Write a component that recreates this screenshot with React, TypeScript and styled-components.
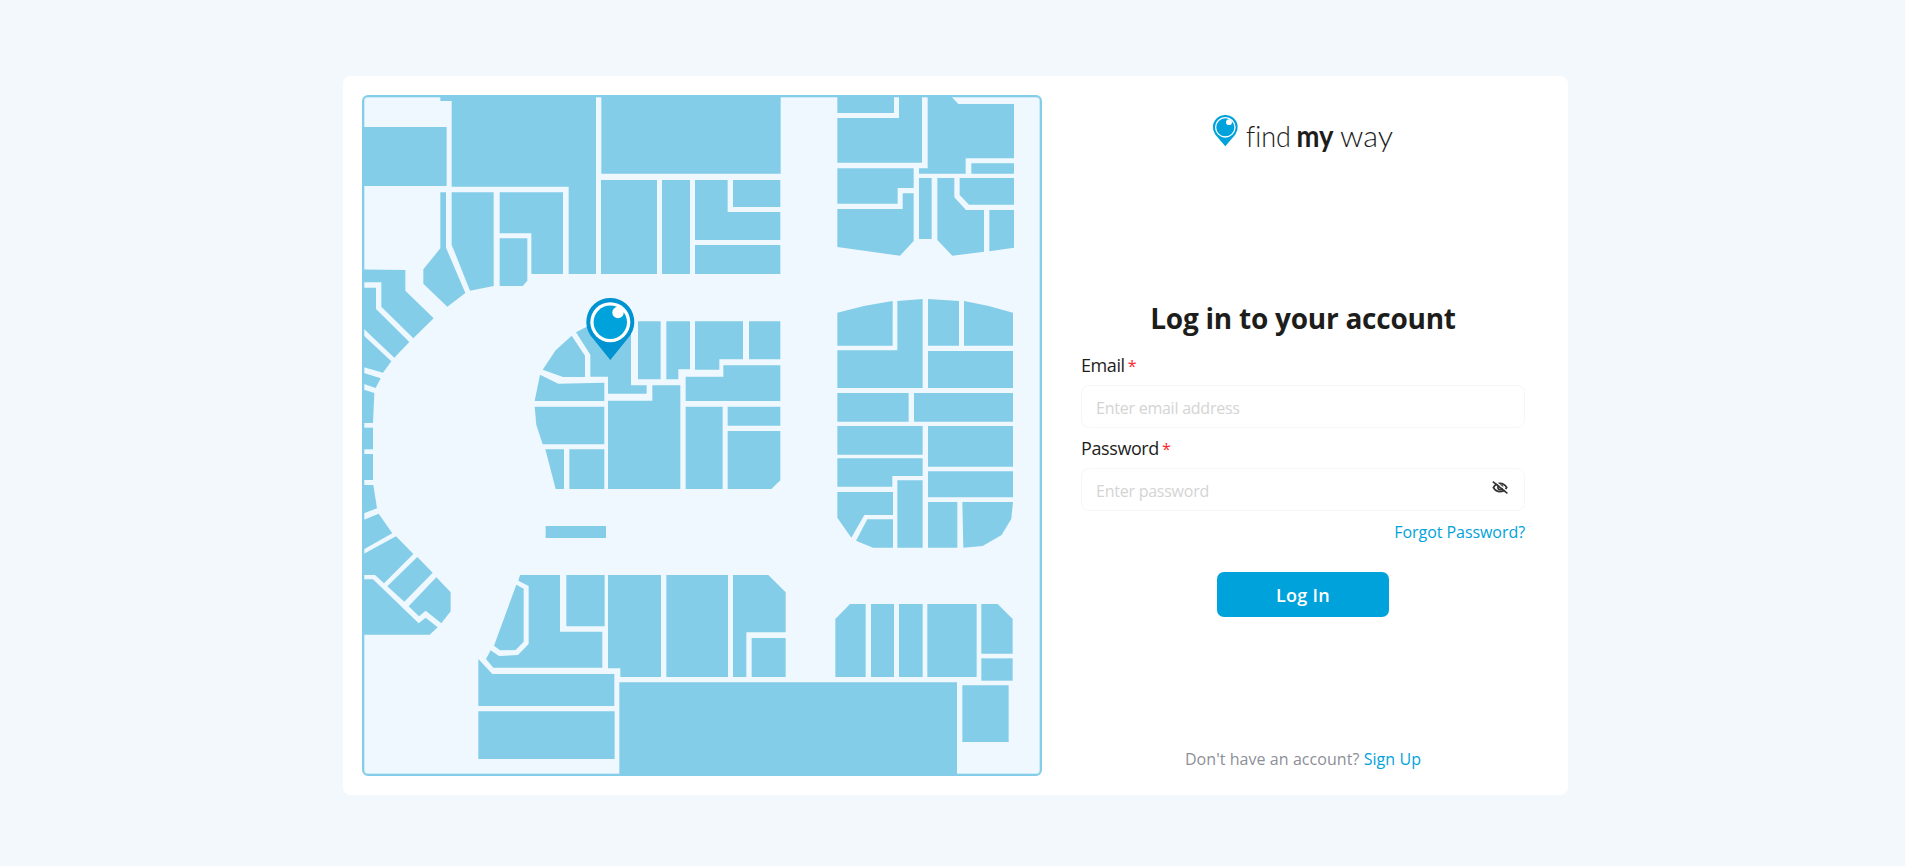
import React, { useState } from "react";
import styled, { createGlobalStyle } from "styled-components";

const colors = {
  page: "#f2f8fc",
  mapGround: "#eff8fe",
  store: "#84cde8",
  brand: "#00a2db",
  pin: "#0093d2",
  ink: "#1d1d1b",
  muted: "#8d8f98",
  placeholder: "#d4d4d4",
  line: "#f6f6f7",
  required: "#ff1f2d",
};

const GlobalStyle = createGlobalStyle`
  * { box-sizing: border-box; }
  body {
    margin: 0;
    background: ${colors.page};
    color: ${colors.ink};
    font-family: "Open Sans", "Noto Sans", sans-serif;
  }
`;

const Page = styled.div`
  height: 100vh;
  min-height: 740px;
  display: flex;
  justify-content: center;
  align-items: flex-start;
  padding: 76px 0 0 6px;
`;

const Card = styled.main`
  display: flex;
  width: 1225px;
  height: 719px;
  padding: 19px;
  background: #fff;
  border-radius: 8px;
`;

const MapFrame = styled.div`
  flex: none;
  width: 680px;
  height: 681px;
  border: 2px solid ${colors.store};
  border-radius: 6px;
  background: ${colors.mapGround};
  overflow: hidden;

  svg { display: block; }
`;

const Panel = styled.section`
  flex: 1;
  display: flex;
  flex-direction: column;
  align-items: center;
  padding: 20px 24px 0 39px;
`;

const LogoBox = styled.div`
  height: 42px;
  svg { display: block; overflow: visible; }
  text { font-variant-ligatures: none; }
`;

const Form = styled.form`
  display: flex;
  flex-direction: column;
  align-items: center;
  width: 444px;
  margin-top: 139px;
`;

const Title = styled.h1`
  margin: 0 0 13px;
  height: 44px;
  font-size: 28px;
  line-height: 44px;
  font-weight: 700;
  letter-spacing: -0.25px;
  white-space: nowrap;
`;

const Field = styled.label`
  display: flex;
  flex-direction: column;
  width: 100%;
  height: 83px;
`;

const Caption = styled.span`
  height: 26px;
  margin-bottom: 6px;
  font-size: 18px;
  line-height: 24px;
  letter-spacing: -0.4px;
`;

const Required = styled.span`
  margin-left: 3px;
  font-size: 16px;
  color: ${colors.required};
`;

const InputBox = styled.span`
  display: flex;
  align-items: center;
  height: 43px;
  padding: 0 16px 0 14px;
  border: 1px solid ${colors.line};
  border-radius: 8px;
`;

const Input = styled.input`
  flex: 1;
  min-width: 0;
  padding: 2px 0 0;
  border: 0;
  outline: 0;
  background: transparent;
  color: ${colors.ink};
  font: 16px "Open Sans", "Noto Sans", sans-serif;
  letter-spacing: -0.24px;

  &::placeholder { color: ${colors.placeholder}; opacity: 1; }
`;

const EyeButton = styled.button`
  display: flex;
  padding: 0 0 4px;
  border: 0;
  background: none;
  color: #333;
`;

const Link = styled.a`
  color: ${colors.brand};
  text-decoration: none;
`;

const ForgotRow = styled.div`
  align-self: flex-end;
  margin-top: 1px;
  font-size: 16px;
  line-height: 24px;
  letter-spacing: -0.06px;
`;

const SubmitButton = styled.button`
  width: 172px;
  height: 45px;
  margin-top: 28px;
  padding: 0;
  border: 0;
  border-radius: 7px;
  background: ${colors.brand};
  color: #fff;
  font: 600 18px "Open Sans", "Noto Sans", sans-serif;
  letter-spacing: 0.3px;
`;

const SignUpRow = styled.p`
  margin: auto 0 5px;
  color: ${colors.muted};
  font-size: 16px;
  line-height: 24px;
  letter-spacing: 0.06px;
`;

type Wing = { x: number; y: number; stores: string[] };

/* Store outlines, drawn at three units per pixel from each wing's origin. */
const wings: Wing[] = [
  {
    x: -22,
    y: -25,
    stores: [
      "301,70 768,70 768,612 686,612 686,350 335,350 335,93 301,93",
      "60,171 320,171 320,348 60,348",
      "301,367 318,367 318,533 376,669 322,710 250,641 250,598 301,535",
      "335,367 461,367 461,648 390,662 335,524",
      "479,367 669,367 669,612 574,612 574,490 479,490",
      "479,505 562,505 562,632 548,648 479,648",
      "60,598 196,600 196,662 281,745 220,805 124,710 124,637 60,637",
      "60,653 108,653 108,717 208,816 163,863 72,777 60,766",
      "60,786 72,797 154,874 129,908 72,892 60,889",
      "60,905 72,909 122,925 107,954 72,942 60,938",
      "60,955 72,959 103,969 99,1059 60,1059",
      "60,1073 99,1073 99,1138 60,1138",
      "60,1152 99,1152 99,1230 60,1230",
      "60,1245 100,1245 111,1315 72,1330 60,1335",
      "60,1354 72,1349 116,1331 157,1390 72,1438 60,1445",
      "60,1458 72,1451 168,1399 220,1452 132,1540 105,1515 60,1515",
      "232,1461 278,1508 193,1595 142,1549",
      "289,1522 332,1567 332,1624 304,1660 257,1622 237,1639 206,1609",
      "60,1528 99,1528 236,1660 257,1643 293,1672 269,1694 60,1694",
    ],
  },
  {
    x: 198,
    y: -25,
    stores: [
      "124,70 662,70 662,311 124,311",
      "123,330 291,330 291,612 123,612",
      "306,330 390,330 390,612 306,612",
      "405,330 503,330 503,426 661,426 661,510 405,510",
      "519,330 661,330 661,411 519,411",
      "405,525 661,525 661,612 405,612",
    ],
  },
  {
    x: 438,
    y: -25,
    stores: [
      "112,70 282,70 282,129 112,129",
      "297,70 366,70 366,278 112,278 112,144 297,144",
      "383,70 445,70 475,102 642,102 642,265 497,265 497,311 357,311 357,295 383,295",
      "514,280 642,280 642,311 514,311",
      "112,295 341,295 341,354 293,354 293,401 112,401",
      "112,417 308,417 308,370 341,370 341,513 300,557 112,531",
      "357,324 395,324 395,507 357,507",
      "412,324 463,324 463,382 498,420 552,420 552,545 457,557 412,510",
      "479,324 642,324 642,404 507,404 479,375",
      "568,420 642,420 642,533 568,544",
    ],
  },
  {
    x: 158,
    y: 195,
    stores: [
      "155,137 195,197 195,261 129,261 68,239 107,181",
      "168,127 200,110 230,95 333,95 333,286 380,286 380,311 264,311 264,260 211,260 211,194",
      "354,94 422,94 422,268 354,268",
      "439,94 510,94 510,238 475,238 475,268 439,268",
      "525,94 669,94 669,208 598,208 598,239 525,239",
      "687,94 781,94 781,208 687,208",
      "497,260 610,260 610,226 781,226 781,333 497,333",
      "60,254 115,281 253,278 253,333 44,333",
      "44,350 253,350 253,463 68,463 49,405",
      "76,478 132,478 132,597 107,597",
      "148,478 253,478 253,597 148,597",
      "264,332 397,332 397,286 481,286 481,597 264,597",
      "497,350 608,350 608,597 497,597",
      "623,350 781,350 781,407 623,407",
      "623,423 781,423 781,571 754,597 623,597",
      "77,708 258,708 258,744 77,744",
    ],
  },
  {
    x: 438,
    y: 195,
    stores: [
      "112,68 195,47 278,33 278,167 112,167",
      "292,33 368,27 368,294 112,294 112,181 292,181",
      "384,27 477,33 477,167 384,167",
      "492,33 563,47 639,68 639,167 492,167",
      "384,183 639,183 639,294 384,294",
      "112,309 326,309 326,395 112,395",
      "342,309 639,309 639,395 342,395",
      "112,408 368,408 368,494 112,494",
      "384,408 639,408 639,530 384,530",
      "112,505 368,505 368,558 277,558 277,590 112,590",
      "384,544 639,544 639,622 384,622",
      "112,606 279,606 279,675 193,675 154,743 112,683",
      "202,688 279,688 279,773 219,773 168,752",
      "292,571 368,571 368,773 292,773",
      "384,636 472,636 472,773 384,773",
      "487,636 639,636 634,686 605,735 548,768 490,773",
    ],
  },
  {
    x: -22,
    y: 445,
    stores: [
      "540,105 660,105 660,275 787,275 787,383 460,383 438,357 452,331 477,348 534,345 566,312 566,138 535,122",
      "529,134 551,146 551,305 527,330 480,331 462,317",
      "679,105 794,105 794,259 679,259",
      "804,105 963,105 963,411 841,411 841,385 804,385",
      "415,357 457,402 823,402 823,498 415,498",
      "415,514 824,514 824,657 415,657",
      "838,427 1851,427 1851,715 838,715",
    ],
  },
  {
    x: 258,
    y: 465,
    stores: [
      "139,45 324,45 324,351 139,351",
      "339,45 445,45 497,97 497,217 379,217 379,351 339,351",
      "395,234 497,234 497,351 395,351",
      "690,132 737,132 737,351 646,351 646,177",
      "753,132 822,132 822,351 753,351",
      "837,132 908,132 908,351 837,351",
      "922,132 1070,132 1070,351 922,351",
      "1084,132 1133,132 1178,177 1178,281 1084,281",
      "1084,295 1178,295 1178,362 1084,362",
      "1027,376 1166,376 1166,546 1027,546",
    ],
  },
];

function FloorPlan() {
  return (
    <svg width="676" height="677" viewBox="2 2 676 677" aria-label="Floor plan">
      <rect
        x="2"
        y="2"
        width="676"
        height="677"
        rx="4"
        fill="none"
        stroke={colors.store}
        strokeOpacity="0.4"
        strokeWidth="1.6"
      />
      {wings.map((wing, i) => (
        <g key={i} fill={colors.store} transform={`translate(${wing.x} ${wing.y}) scale(${1 / 3})`}>
          {wing.stores.map((points) => (
            <polygon key={points} points={points} />
          ))}
        </g>
      ))}
      <g transform="translate(248.3 227.2)">
        <path d="M0 37.7 L-20 13 A24 24 0 1 1 20 13 Z" fill={colors.pin} />
        <circle r="20" fill="#fff" />
        <circle r="16.7" fill={colors.brand} />
        <circle cx="7.7" cy="-9.7" r="5.7" fill="#fff" />
      </g>
    </svg>
  );
}

function Logo() {
  return (
    <svg width="180" height="42" viewBox="0 0 180 42" aria-label="find my way">
      <path d="M12.3 31.2 L2.2 19.5 A12.4 12.4 0 1 1 22.4 19.5 Z" fill={colors.brand} />
      <circle cx="12.3" cy="12.3" r="9.7" fill="none" stroke="#fff" strokeWidth="1.3" />
      <circle cx="16" cy="7.2" r="2.9" fill="#fff" />
      <g fontFamily="Lato, sans-serif" fontSize="30" fill={colors.ink}>
        <text x="33" y="31.5" fontWeight="300" textLength="45" lengthAdjust="spacingAndGlyphs">find</text>
        <text x="83.5" y="31.5" fontWeight="700" textLength="37" lengthAdjust="spacingAndGlyphs">my</text>
        <text x="127" y="31.5" fontWeight="300" textLength="53" lengthAdjust="spacingAndGlyphs">way</text>
      </g>
    </svg>
  );
}

function EyeOffIcon() {
  return (
    <svg width="16" height="13" viewBox="0 0 16 13" fill="none" stroke="currentColor">
      <path
        d="M1.4 6.5 C3.2 3.5 5.4 2.4 8 2.4 C10.8 2.4 13 3.7 14.7 6.5 C13 9.4 10.8 10.7 8 10.7 C5.2 10.7 3 9.3 1.4 6.5 Z"
        strokeWidth="1.7"
      />
      <circle cx="8.2" cy="6.4" r="2.3" strokeWidth="1.7" />
      <path d="M2 -.5 L16.4 11.1" stroke="#fff" strokeWidth="1.4" />
      <path d="M.8 .6 L15.4 12.4" strokeWidth="1.6" />
    </svg>
  );
}

export default function App() {
  const [visible, setVisible] = useState(false);

  return (
    <>
      <GlobalStyle />
      <Page>
        <Card>
          <MapFrame>
            <FloorPlan />
          </MapFrame>
          <Panel>
            <LogoBox>
              <Logo />
            </LogoBox>
            <Form onSubmit={(e) => e.preventDefault()}>
              <Title>Log in to your account</Title>
              <Field>
                <Caption>
                  Email<Required>*</Required>
                </Caption>
                <InputBox>
                  <Input type="email" placeholder="Enter email address" />
                </InputBox>
              </Field>
              <Field>
                <Caption>
                  Password<Required>*</Required>
                </Caption>
                <InputBox>
                  <Input type={visible ? "text" : "password"} placeholder="Enter password" />
                  <EyeButton type="button" aria-label="Show password" onClick={() => setVisible(!visible)}>
                    <EyeOffIcon />
                  </EyeButton>
                </InputBox>
              </Field>
              <ForgotRow>
                <Link href="#">Forgot Password?</Link>
              </ForgotRow>
              <SubmitButton type="submit">Log In</SubmitButton>
            </Form>
            <SignUpRow>
              Don't have an account? <Link href="#">Sign Up</Link>
            </SignUpRow>
          </Panel>
        </Card>
      </Page>
    </>
  );
}
